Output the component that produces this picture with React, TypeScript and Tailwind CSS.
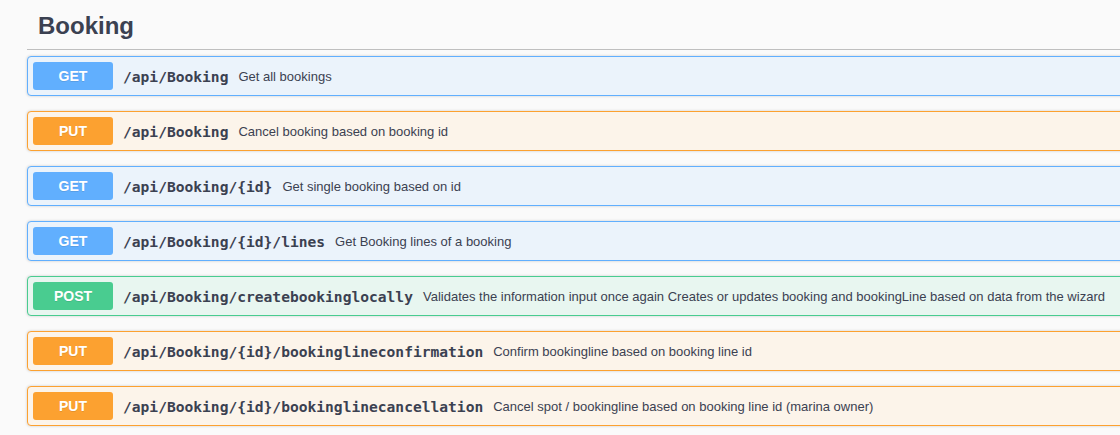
import React from "react";

type Op = { method: "GET" | "PUT" | "POST"; path: string; desc: string };

const ops: Op[] = [
  { method: "GET", path: "/api/Booking", desc: "Get all bookings" },
  { method: "PUT", path: "/api/Booking", desc: "Cancel booking based on booking id" },
  { method: "GET", path: "/api/Booking/{id}", desc: "Get single booking based on id" },
  { method: "GET", path: "/api/Booking/{id}/lines", desc: "Get Booking lines of a booking" },
  {
    method: "POST",
    path: "/api/Booking/createbookinglocally",
    desc: "Validates the information input once again Creates or updates booking and bookingLine based on data from the wizard",
  },
  { method: "PUT", path: "/api/Booking/{id}/bookinglineconfirmation", desc: "Confirm bookingline based on booking line id" },
  {
    method: "PUT",
    path: "/api/Booking/{id}/bookinglinecancellation",
    desc: "Cancel spot / bookingline based on booking line id (marina owner)",
  },
];

const styles = {
  GET: { row: "bg-[#ebf3fb] border-[#61affe]", badge: "bg-[#61affe]" },
  PUT: { row: "bg-[#fcf4ea] border-[#fca130]", badge: "bg-[#fca130]" },
  POST: { row: "bg-[#e8f6f0] border-[#49cc90]", badge: "bg-[#49cc90]" },
};

export default function App() {
  return (
    <div className="w-[1120px] h-[435px] overflow-hidden bg-[#fafafa] text-[#3b4151]" style={{ fontFamily: '"Liberation Sans", Arial, sans-serif' }}>
      <div className="pl-[27px] w-[1400px]">
        <div className="h-[50px] flex items-center pl-[11px] border-b border-[#bfbfbf] mb-[6px]">
          <h4 className="text-[24px] font-bold leading-none pt-[3px]" style={{ fontFamily: '"Liberation Sans", Arial, sans-serif' }}>
            Booking
          </h4>
        </div>
        <div className="flex flex-col gap-[15px]">
          {ops.map((op, i) => (
            <div
              key={i}
              className={`h-[40px] border rounded-[4px] flex items-center p-[5px] shadow-[0_0_3px_rgba(0,0,0,0.19)] ${styles[op.method].row}`}
            >
              <div
                className={`w-[80px] h-[28px] rounded-[3px] flex items-center justify-center text-white text-[14px] font-bold [text-shadow:0_1px_0_rgba(0,0,0,0.1)] ${styles[op.method].badge}`}
              >
                {op.method}
              </div>
              <span
                className="px-[10px] pt-[2px] text-[14.6px] font-bold text-[#3b4151] whitespace-nowrap"
                style={{ fontFamily: '"DejaVu Sans Mono", "Liberation Mono", monospace' }}
              >
                {op.path}
              </span>
              <span className="pt-[2px] text-[13px] text-[#3b4151] whitespace-nowrap">{op.desc}</span>
            </div>
          ))}
        </div>
      </div>
    </div>
  );
}
